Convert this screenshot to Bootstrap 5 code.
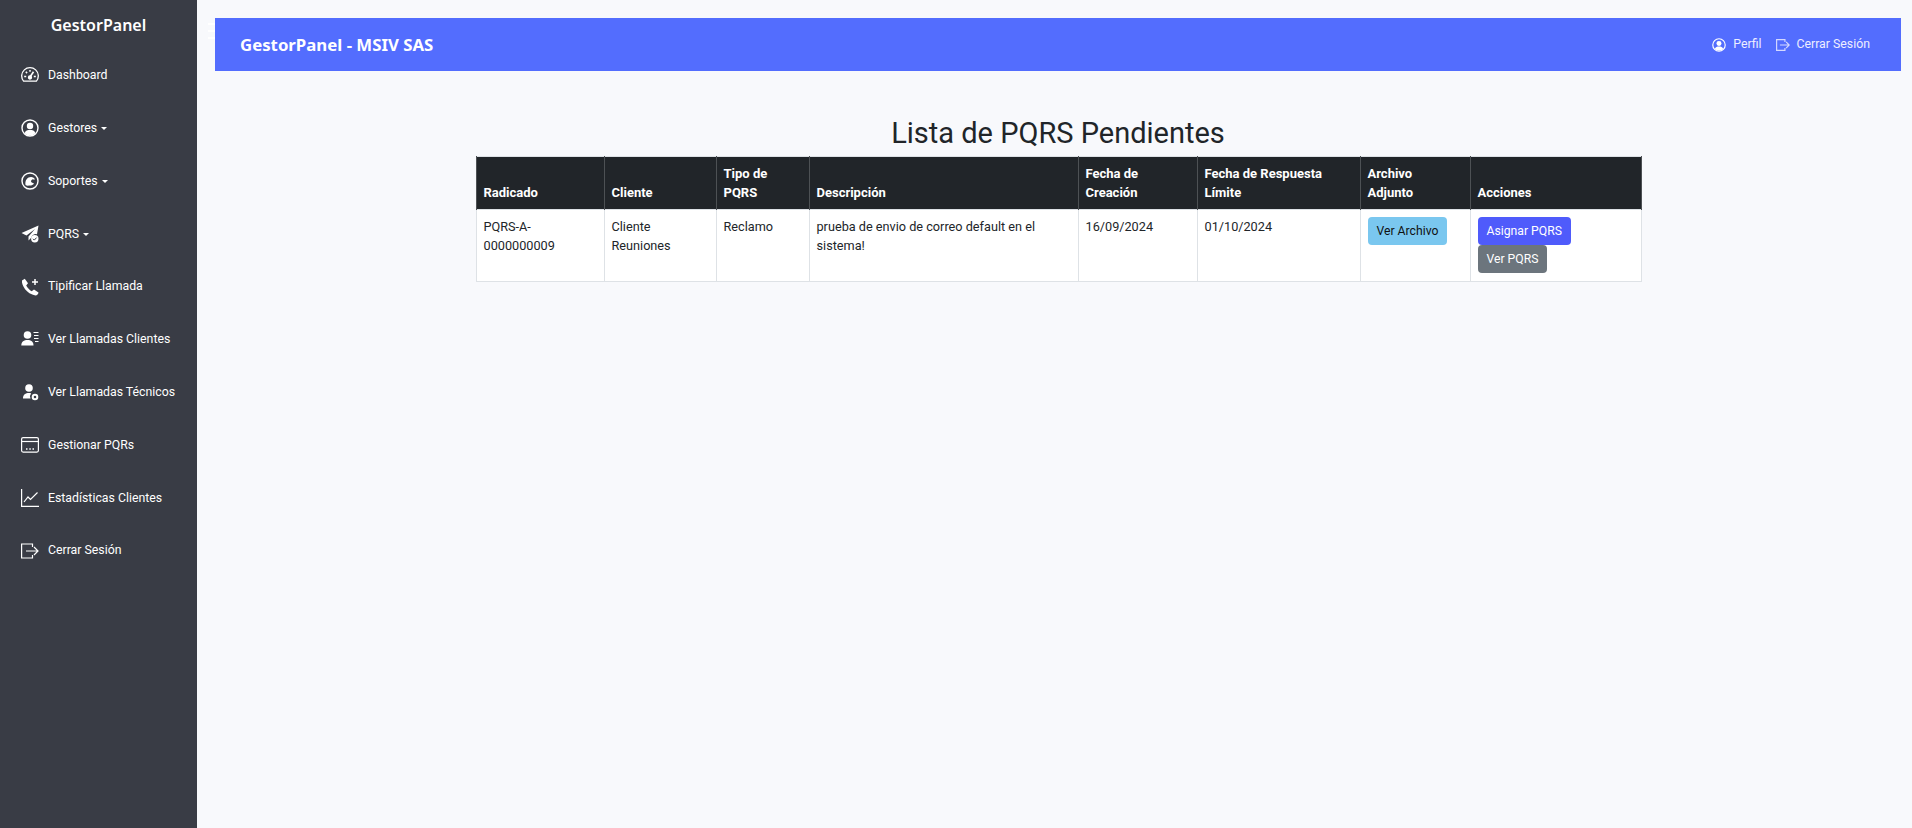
<!DOCTYPE html>
<html lang="es">
<head>
<meta charset="utf-8">
<title>GestorPanel</title>
<link href="https://cdn.jsdelivr.net/npm/bootstrap@5.3.0/dist/css/bootstrap.min.css" rel="stylesheet">
<style>
html,body{height:100%}
body{background:#f8f9fc;font-family:Roboto,"Noto Sans",sans-serif;font-size:13px;color:#212529;overflow:hidden}
.shell{height:828px}
.side{width:197px;background:#393c45;flex:none}
.side-brand{font-family:"Noto Sans",sans-serif;font-size:16px;font-weight:600;color:#fff;text-align:center;height:49px;line-height:50px}
.side-link{height:52.8px;color:#fff;text-decoration:none;font-size:12.3px;padding-left:21px;gap:9px}
.side-link svg{width:18px;height:18px;flex:none}
.caret{display:inline-block;width:0;height:0;border-top:3.5px solid #fff;border-left:3.5px solid transparent;border-right:3.5px solid transparent;margin-left:4px;vertical-align:2px}
.main-area{padding:18px 11px 0 18px}
.topbar{height:53px;background:#536dfe;color:#fff;padding:0 31px 0 25px;position:relative}
.top-title{font-family:"Noto Sans",sans-serif;font-size:16.8px;font-weight:700;color:#fff}
.top-link{font-size:12.3px;color:#eef;text-decoration:none;gap:7px}
.top-link svg{width:14px;height:14px}
.top-links{gap:14px}
.burger{position:absolute;left:-7px;top:5px;width:7px;height:16px;display:flex;flex-direction:column;justify-content:space-between}
.burger i{display:block;height:2px;background:#fff}
.page-title{font-size:29px;font-weight:400;text-align:center;line-height:38px;margin:43px 0 0}
.table-wrap{width:1165px;margin:4px auto 0}
.pq-table{font-size:12.7px;line-height:19px;margin:0;table-layout:fixed;width:1165px;background:#fff}
.pq-table th{font-size:13px;font-weight:700;vertical-align:bottom;padding:7px 7px 7px;background:#212529;color:#fff;border-color:#4d5154}
.pq-table td{padding:7px 7px 8px;vertical-align:top;border-color:#dee2e6;background:#fff;color:#212529}
.act{font-size:12.2px;line-height:18px;padding:4px 8px;border-radius:4px;display:block;width:max-content;border:1px solid transparent}
.act-info{background:#7ac7ef;color:#111}
.act-pri{background:#4f5bfb;color:#fff}
.act-sec{background:#6c757d;color:#fff}
</style>
</head>
<body>
<div class="shell d-flex">
  <aside class="side">
    <div class="side-brand">GestorPanel</div>
    <a class="side-link d-flex align-items-center" href="#"><svg viewBox="0 0 18 18" fill="none" stroke="#fff" stroke-width="1.3"><path d="M2.600 15.200A8.300 8.300 0 1 1 15.400 15.200Z"/><path d="M9 11 12.500 5.800" stroke-width="1.600"/><path d="M3.200 10.500h2M12.800 10.500h2M9 4v1.800M4.800 5.800l1.300 1.300" stroke-width="1.500"/><circle cx="9" cy="11.500" r="1.500" fill="#fff"/></svg>Dashboard</a>
    <a class="side-link d-flex align-items-center" href="#"><svg viewBox="0 0 18 18" fill="none" stroke="#fff" stroke-width="1.4"><circle cx="9" cy="9" r="8"/><circle cx="9" cy="7" r="3.200" fill="#fff" stroke="none"/><path d="M3.500 14.300C4.500 11.500 6.500 11 9 11s4.500.5 5.500 3.300A8 8 0 0 1 3.500 14.300Z" fill="#fff" stroke="none"/></svg><span>Gestores<span class="caret"></span></span></a>
    <a class="side-link d-flex align-items-center" href="#"><svg viewBox="0 0 18 18" fill="none" stroke="#fff" stroke-width="1.4"><circle cx="9" cy="9" r="8"/><path d="M4.500 13C3.800 8 6.500 5 10 5c2 0 3.500 1 4 2.500L11 7.500 10 10l3 1.500c-1 1.500-2.500 2-4 2-1 0-3 .7-4.500-.5Z" fill="#fff" stroke="none"/><circle cx="11.500" cy="9" r="1.200" fill="#393c45" stroke="none"/></svg><span>Soportes<span class="caret"></span></span></a>
    <a class="side-link d-flex align-items-center" href="#"><svg viewBox="0 0 18 18" fill="#fff"><path d="M17.500.500.500 8l5 2.500L14 4 7.500 11.500v4l2.700-2.800A4.500 4.500 0 0 1 16 9.300Z"/><circle cx="13.800" cy="13.800" r="3.700"/><path d="M12 13.800l1.300 1.300 2.300-2.500" fill="none" stroke="#393c45" stroke-width="1"/></svg><span>PQRS<span class="caret"></span></span></a>
    <a class="side-link d-flex align-items-center" href="#"><svg viewBox="0 0 18 18" fill="#fff"><path d="M3.800.800 1 2.500C.300 7 5.500 16 14.500 17.500c1.500 0 3-1.500 3-3L13 11.500l-2.300 1.800C8.500 12 6.500 10 5.200 7.500L7 5.200Z"/><path d="M14 1v6M11 4h6" stroke="#fff" stroke-width="1.500"/></svg>Tipificar Llamada</a>
    <a class="side-link d-flex align-items-center" href="#"><svg viewBox="0 0 18 18" fill="#fff"><circle cx="6.500" cy="5" r="3.800"/><path d="M.300 15.500C.300 11.500 3 10 6.500 10s6 1.500 6 5.500Z"/><path d="M12.500 2.500h5M13 5.500h4.500M13 8.500h4.500M14 11.500h3.500" stroke="#fff" stroke-width="1.200"/></svg>Ver Llamadas Clientes</a>
    <a class="side-link d-flex align-items-center" href="#"><svg viewBox="0 0 18 18" fill="#fff"><circle cx="8" cy="5" r="3.800"/><path d="M2 15.500C2 11.500 4.500 10 8 10c1 0 1.500 0 2.200.3A5 5 0 0 0 9.500 15.500Z"/><circle cx="14" cy="14" r="2.300" fill="none" stroke="#fff" stroke-width="2"/></svg>Ver Llamadas Técnicos</a>
    <a class="side-link d-flex align-items-center" href="#"><svg viewBox="0 0 18 16" fill="none" stroke="#fff" stroke-width="1.200"><rect x=".6" y=".6" width="16.800" height="14.500" rx="1.500"/><path d="M.6 4.500h16.800"/><path d="M5 12h1.500M8.300 12h1.500M11.500 12H13" stroke-width="1.600"/></svg>Gestionar PQRs</a>
    <a class="side-link d-flex align-items-center" href="#"><svg viewBox="0 0 18 18" fill="none" stroke="#fff" stroke-width="1.200"><path d="M.6 0v17.400H18"/><path d="M3 13l4-5 2.500 2.500L16.500 3.500"/></svg>Estadísticas Clientes</a>
    <a class="side-link d-flex align-items-center" href="#"><svg viewBox="0 0 18 16" fill="none" stroke="#fff" stroke-width="1.200"><path d="M11.500 4V1H.6v14h10.900v-3"/><path d="M5 8h11.500M13 4l4 4-4 4"/></svg>Cerrar Sesión</a>
  </aside>
  <main class="main-area flex-grow-1">
    <nav class="topbar d-flex align-items-center justify-content-between">
      <div class="burger"><i></i><i></i><i></i></div>
      <span class="top-title">GestorPanel - MSIV SAS</span>
      <div class="d-flex top-links">
        <a class="top-link d-flex align-items-center" href="#"><svg viewBox="0 0 18 18" fill="none" stroke="#fff" stroke-width="1.500"><circle cx="9" cy="9" r="8"/><circle cx="9" cy="7" r="3.200" fill="#fff" stroke="none"/><path d="M3.500 14.300C4.500 11.500 6.500 11 9 11s4.500.5 5.500 3.300A8 8 0 0 1 3.500 14.300Z" fill="#fff" stroke="none"/></svg>Perfil</a>
        <a class="top-link d-flex align-items-center" href="#"><svg viewBox="0 0 18 16" fill="none" stroke="#d5d9ff" stroke-width="1.500"><path d="M11.500 4V1H.8v14h10.700v-3"/><path d="M5 8h11.500M13 4l4 4-4 4"/></svg>Cerrar Sesión</a>
      </div>
    </nav>
    <h2 class="page-title">Lista de PQRS Pendientes</h2>
    <div class="table-wrap">
      <table class="table table-bordered pq-table">
        <colgroup><col style="width:128px"><col style="width:112px"><col style="width:93px"><col style="width:269px"><col style="width:119px"><col style="width:163px"><col style="width:110px"><col style="width:171px"></colgroup>
        <thead><tr><th>Radicado</th><th>Cliente</th><th>Tipo de PQRS</th><th>Descripción</th><th>Fecha de Creación</th><th>Fecha de Respuesta Límite</th><th>Archivo<br>Adjunto</th><th>Acciones</th></tr></thead>
        <tbody><tr>
          <td>PQRS-A-<br>0000000009</td><td>Cliente Reuniones</td><td>Reclamo</td><td>prueba de envio de correo default en el sistema!</td><td>16/09/2024</td><td>01/10/2024</td>
          <td><a href="#" class="btn act act-info">Ver Archivo</a></td>
          <td><a href="#" class="btn act act-pri">Asignar PQRS</a><a href="#" class="btn act act-sec">Ver PQRS</a></td>
        </tr></tbody>
      </table>
    </div>
  </main>
</div>
<script src="https://cdn.jsdelivr.net/npm/bootstrap@5.3.0/dist/js/bootstrap.bundle.min.js"></script>
</body>
</html>
